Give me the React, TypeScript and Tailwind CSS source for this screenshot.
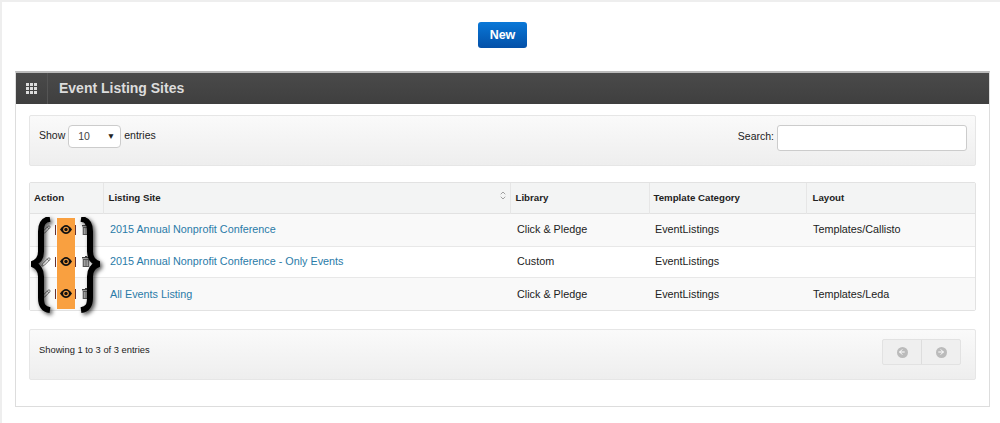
import { ArrowLeft, ArrowRight, ChevronDown, ChevronUp, Pencil } from "lucide-react";

const rows = [
  { name: "2015 Annual Nonprofit Conference", library: "Click & Pledge", category: "EventListings", layout: "Templates/Callisto", h: "h-[33px]" },
  { name: "2015 Annual Nonprofit Conference - Only Events", library: "Custom", category: "EventListings", layout: "", h: "h-[31px]" },
  { name: "All Events Listing", library: "Click & Pledge", category: "EventListings", layout: "Templates/Leda", h: "h-[33px]" },
];

function Brace({ flip }: { flip?: boolean }) {
  return (
    <svg
      width="26"
      height="96"
      viewBox="0 0 26 100"
      preserveAspectRatio="none"
      className={flip ? "-scale-x-100 drop-shadow-[-2px_2px_2px_rgba(0,0,0,0.7)]" : "drop-shadow-[2px_2px_2px_rgba(0,0,0,0.7)]"}
    >
      <path
        d="M19 2 C12 3 10 7 10 15 L10 36 C10 43 7 47 1 49 C7 51 10 55 10 62 L10 84 C10 92 12 96 19 97"
        fill="none"
        stroke="#000"
        strokeWidth="6"
      />
    </svg>
  );
}

function SolidEye() {
  return (
    <svg width="12" height="9" viewBox="0 0 12 9" className="relative z-10 ml-[4px]">
      <path d="M0 4.5 C2 1.5 4 0 6 0 C8 0 10 1.5 12 4.5 C10 7.5 8 9 6 9 C4 9 2 7.5 0 4.5 Z" fill="#111" />
      <circle cx="6" cy="4.5" r="2.8" fill="#f9a040" />
      <circle cx="6" cy="4.5" r="1.7" fill="#111" />
    </svg>
  );
}

function SolidTrash() {
  return (
    <svg width="8" height="11" viewBox="0 0 8 11" className="ml-[6px]">
      <path d="M3 0 H5 V1 H8 V2.5 H0 V1 H3 Z" fill="#444" />
      <path d="M0.7 3 H7.3 V11 H0.7 Z" fill="#555" />
      <path d="M2.3 4 V10 M4 4 V10 M5.7 4 V10" stroke="#ddd" strokeWidth="0.7" />
    </svg>
  );
}

export default function App() {
  return (
    <div className="h-[423px] w-[1000px] overflow-hidden border-l-2 border-t-2 border-[#eeeeee] bg-white font-['Liberation_Sans',Arial,sans-serif] text-[10px] text-[#222222]">
      <div className="flex h-[69px] justify-center pt-[20px]">
        <button className="ml-[3px] h-[26px] w-[49px] rounded-[3px] bg-gradient-to-b from-[#0a78d8] to-[#0450a8] text-[12.5px] font-bold text-white">
          New
        </button>
      </div>

      <div className="ml-[13px] h-[336px] w-[975px] border border-t-2 border-[#dddddd] border-t-[#bbbbbb]">
        <div className="flex h-[31px] items-center bg-gradient-to-b from-[#4a4a4a] to-[#3f3f3f]">
          <div className="flex h-full w-[32px] items-center justify-center border-r border-[#555555]">
            <div className="grid grid-cols-3 gap-[1px]">
              {Array.from({ length: 9 }).map((_, i) => (
                <span key={i} className="h-[3px] w-[3px] bg-[#dddddd]" />
              ))}
            </div>
          </div>
          <h1 className="ml-[11px] text-[14px] font-bold text-[#dcdcdc]">Event Listing Sites</h1>
        </div>

        <div className="px-[13px] pt-[11px]">
          <div className="flex h-[51px] justify-between rounded-[2px] border border-[#e6e6e6] bg-gradient-to-b from-[#fafafa] to-[#eeeeee] pl-[9px] pr-[8px] pt-[9px]">
            <div className="flex h-[23px] items-center gap-[3px] text-[10.5px]">
              <span className="-mt-[2px]">Show</span>
              <div className="flex h-[23px] w-[53px] items-center justify-between rounded-[4px] border border-[#cccccc] bg-white pl-[9px] pr-[5px] text-[#444444]">
                <span>10</span>
                <span className="text-[8.5px] text-[#222222]">▼</span>
              </div>
              <span className="-mt-[2px]">entries</span>
            </div>
            <div className="flex h-[26px] items-center gap-[3px] text-[10.5px]">
              <span className="-mt-[2px]">Search:</span>
              <input className="h-[26px] w-[190px] rounded-[3px] border border-[#cccccc] bg-white" />
            </div>
          </div>

          <div className="relative mt-[16px] rounded-[2px] border border-[#e2e2e2]">
            <table className="w-full table-fixed border-collapse">
              <colgroup>
                <col className="w-[73px]" />
                <col className="w-[407px]" />
                <col className="w-[139px]" />
                <col className="w-[157px]" />
                <col />
              </colgroup>
              <thead>
                <tr className="h-[30px] border-b border-[#e2e2e2] bg-[#f3f4f4] text-left text-[9.7px] font-bold">
                  <th className="border-r border-[#e6e6e6] pl-[4px] pt-[2px]">Action</th>
                  <th className="relative border-r border-[#e6e6e6] pl-[5px] pt-[2px]">
                    Listing Site
                    <span className="absolute right-[3px] top-[6px] flex flex-col text-[#777777]">
                      <ChevronUp size={8} className="-mb-[3px]" />
                      <ChevronDown size={8} />
                    </span>
                  </th>
                  <th className="border-r border-[#e6e6e6] pl-[5px] pt-[2px]">Library</th>
                  <th className="border-r border-[#e6e6e6] pl-[4px] pt-[2px]">Template Category</th>
                  <th className="pl-[6px] pt-[2px]">Layout</th>
                </tr>
              </thead>
              <tbody>
                {rows.map((r, i) => (
                  <tr key={r.name} className={`${r.h} ${i < 2 ? "border-b border-[#e8e8e8]" : ""} ${i === 1 ? "bg-white" : "bg-[#f9f9f9]"} text-[10.8px]`}>
                    <td>
                      <div className="flex items-center pl-[11px] text-[#555555]">
                        <Pencil size={10} />
                        <span className="ml-[4px] h-[10px] w-px bg-[#663333]" />
                        <SolidEye />
                        <span className="relative z-10 ml-[3px] h-[10px] w-px bg-[#663333]" />
                        <SolidTrash />
                      </div>
                    </td>
                    <td className="pl-[7px] text-[#2a7ba8]">{r.name}</td>
                    <td className="pl-[7px]">{r.library}</td>
                    <td className="pl-[6px]">{r.category}</td>
                    <td className="pl-[7px]">{r.layout}</td>
                  </tr>
                ))}
              </tbody>
            </table>

            {/* annotation drawn over the action column */}
            <div className="absolute left-[27px] top-[35px] h-[91px] w-[18px] bg-[#f9a040]" />
            <div className="absolute left-[1px] top-[34px] z-20">
              <Brace />
            </div>
            <div className="absolute left-[44px] top-[34px] z-20">
              <Brace flip />
            </div>
          </div>

          <div className="mt-[18px] flex h-[51px] items-center justify-between rounded-[2px] border border-[#e6e6e6] bg-gradient-to-b from-[#fafafa] to-[#eeeeee] pl-[9px] pr-[14px]">
            <span className="-mt-[8px] text-[9.35px]">Showing 1 to 3 of 3 entries</span>
            <div className="-mt-[5px] flex h-[26px] w-[79px] rounded-[2px] border border-[#e2e2e2] bg-[#efefef]">
              <div className="flex flex-1 items-center justify-center border-r border-[#dddddd]">
                <span className="flex h-[11px] w-[11px] items-center justify-center rounded-full bg-[#bbbbbb] text-white">
                  <ArrowLeft size={8} strokeWidth={3} />
                </span>
              </div>
              <div className="flex flex-1 items-center justify-center">
                <span className="flex h-[11px] w-[11px] items-center justify-center rounded-full bg-[#bbbbbb] text-white">
                  <ArrowRight size={8} strokeWidth={3} />
                </span>
              </div>
            </div>
          </div>
        </div>
      </div>
    </div>
  );
}
